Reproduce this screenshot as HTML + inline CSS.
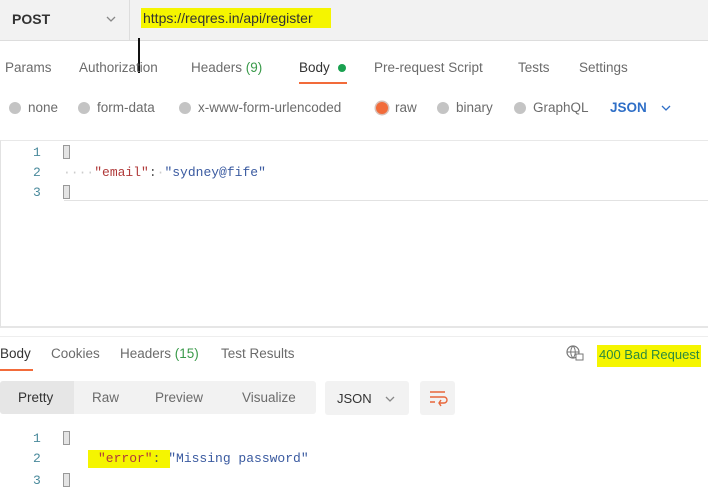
<!DOCTYPE html>
<html><head><style>
body{margin:0;width:708px;height:490px;background:#fff;font-family:"Liberation Sans",sans-serif;position:relative;overflow:hidden;color:#555}
.a{position:absolute;white-space:nowrap}
.t{font-size:13.5px;color:#6b6b6b}
.mono{font-family:"Liberation Mono",monospace;font-size:13px}
.rd{position:absolute;width:12px;height:12px;border-radius:50%;background:#c4c4c4}
.ln{color:#4a8a9c}
.br{display:inline-block;width:7px;height:14px;background:#e4e4e4;border:1px solid #999;box-sizing:border-box;vertical-align:-2px}
</style></head><body>
<div class="a" style="left:0;top:0;width:708px;height:40px;background:#f2f2f2;border-bottom:1px solid #ddd"></div>
<div class="a" style="left:129px;top:0;width:1px;height:40px;background:#ddd"></div>
<div class="a" style="left:12px;top:11px;font-size:14px;font-weight:bold;color:#333">POST</div>
<svg class="a" style="left:105px;top:14px" width="12" height="10"><path d="M2 3l4 4 4-4" stroke="#888" stroke-width="1.3" fill="none"/></svg>
<div class="a" style="left:141px;top:8px;width:190px;height:20px;background:#f5f500"></div>
<div class="a" style="left:143px;top:10px;font-size:14px;color:#333">https://reqres.in/api/register</div>
<div class="a" style="left:138px;top:38px;width:1.5px;height:35px;background:#111"></div>

<div class="a t" style="left:5px;top:60px">Params</div>
<div class="a t" style="left:79px;top:60px">Authorization</div>
<div class="a t" style="left:191px;top:60px">Headers <span style="color:#3a9a4a">(9)</span></div>
<div class="a" style="left:299px;top:60px;font-size:13.5px;color:#333">Body</div>
<div class="a" style="left:338px;top:64px;width:8px;height:8px;border-radius:50%;background:#1aa150"></div>
<div class="a" style="left:299px;top:82px;width:48px;height:2px;background:#f26b3a"></div>
<div class="a t" style="left:374px;top:60px">Pre-request Script</div>
<div class="a t" style="left:518px;top:60px">Tests</div>
<div class="a t" style="left:579px;top:60px">Settings</div>

<div class="rd" style="left:9px;top:102px"></div><div class="a t" style="left:28px;top:100px">none</div>
<div class="rd" style="left:78px;top:102px"></div><div class="a t" style="left:97px;top:100px">form-data</div>
<div class="rd" style="left:179px;top:102px"></div><div class="a t" style="left:198px;top:100px">x-www-form-urlencoded</div>
<div class="rd" style="left:376px;top:102px;background:#f26b3a;box-shadow:0 0 0 1.5px #d8c0b8"></div><div class="a t" style="left:395px;top:100px">raw</div>
<div class="rd" style="left:437px;top:102px"></div><div class="a t" style="left:456px;top:100px">binary</div>
<div class="rd" style="left:514px;top:102px"></div><div class="a t" style="left:533px;top:100px">GraphQL</div>
<div class="a" style="left:610px;top:100px;font-size:13.5px;font-weight:bold;color:#2f6fc7">JSON</div>
<svg class="a" style="left:660px;top:103px" width="12" height="10"><path d="M2 3l4 4 4-4" stroke="#2f6fc7" stroke-width="1.3" fill="none"/></svg>

<div class="a" style="left:0;top:140px;width:708px;height:188px;border-left:1px solid #e2e2e2;border-top:1px solid #e8e8e8;border-bottom:2px solid #e6e6e6;box-sizing:border-box"></div>
<div class="a" style="left:64px;top:200px;width:644px;height:1px;background:#e2e2e2"></div>
<div class="a mono ln" style="left:33px;top:145px">1</div>
<div class="a mono ln" style="left:33px;top:165px">2</div>
<div class="a mono ln" style="left:33px;top:185px">3</div>
<div class="a mono" style="left:63px;top:145px"><span class="br"></span></div>
<div class="a mono" style="left:63px;top:165px"><span style="color:#ccc">····</span><span style="color:#b03a3a">"email"</span><span style="color:#555">:</span><span style="color:#ccc">·</span><span style="color:#3a5aa0">"sydney@fife"</span></div>
<div class="a mono" style="left:63px;top:185px"><span class="br"></span></div>

<div class="a" style="left:0;top:336px;width:708px;height:1px;background:#eee"></div>
<div class="a" style="left:0;top:346px;font-size:13.5px;color:#333">Body</div>
<div class="a" style="left:0;top:369px;width:33px;height:2px;background:#f26b3a"></div>
<div class="a t" style="left:51px;top:346px">Cookies</div>
<div class="a t" style="left:120px;top:346px">Headers <span style="color:#3a9a4a">(15)</span></div>
<div class="a t" style="left:221px;top:346px">Test Results</div>
<svg class="a" style="left:566px;top:345px" width="18" height="16"><circle cx="7" cy="7" r="6" stroke="#777" stroke-width="1.2" fill="none"/><path d="M1 7h12M7 1c-3 3-3 9 0 12M7 1c3 3 3 9 0 12" stroke="#777" stroke-width="1" fill="none"/><rect x="10" y="9" width="7" height="6" fill="#fff" stroke="#777"/></svg>
<div class="a" style="left:597px;top:345px;width:104px;height:22px;background:#f5f500"></div>
<div class="a" style="left:599px;top:347px;font-size:13px;color:#2b8a3e">400 Bad Request</div>

<div class="a" style="left:0;top:381px;width:316px;height:33px;background:#f2f2f2;border-radius:3px"></div>
<div class="a" style="left:0;top:381px;width:74px;height:33px;background:#e6e6e6;border-radius:3px 0 0 3px"></div>
<div class="a" style="left:18px;top:390px;font-size:13.5px;color:#333">Pretty</div>
<div class="a t" style="left:92px;top:390px">Raw</div>
<div class="a t" style="left:155px;top:390px">Preview</div>
<div class="a t" style="left:242px;top:390px">Visualize</div>
<div class="a" style="left:325px;top:381px;width:84px;height:34px;background:#f2f2f2;border-radius:3px"></div>
<div class="a" style="left:337px;top:391px;font-size:13px;color:#333">JSON</div>
<svg class="a" style="left:384px;top:394px" width="12" height="10"><path d="M2 3l4 4 4-4" stroke="#888" stroke-width="1.3" fill="none"/></svg>
<div class="a" style="left:420px;top:381px;width:35px;height:34px;background:#f2f2f2;border-radius:3px"></div>
<svg class="a" style="left:428px;top:388px" width="20" height="20"><path d="M2 4h15M2 9h14a3 3 0 0 1 0 6h-5M13 12l-2 3 2 3M2 14h5" stroke="#e8663a" stroke-width="1.4" fill="none"/></svg>

<div class="a mono ln" style="left:33px;top:431px">1</div>
<div class="a mono ln" style="left:33px;top:451px">2</div>
<div class="a mono ln" style="left:33px;top:473px">3</div>
<div class="a mono" style="left:63px;top:431px"><span class="br"></span></div>
<div class="a" style="left:88px;top:450px;width:82px;height:18px;background:#f5f500"></div>
<div class="a mono" style="left:98px;top:451px"><span style="color:#b03a3a">"error"</span><span style="color:#555">: </span><span style="color:#3a5aa0">"Missing password"</span></div>
<div class="a mono" style="left:63px;top:473px"><span class="br"></span></div>
</body></html>
